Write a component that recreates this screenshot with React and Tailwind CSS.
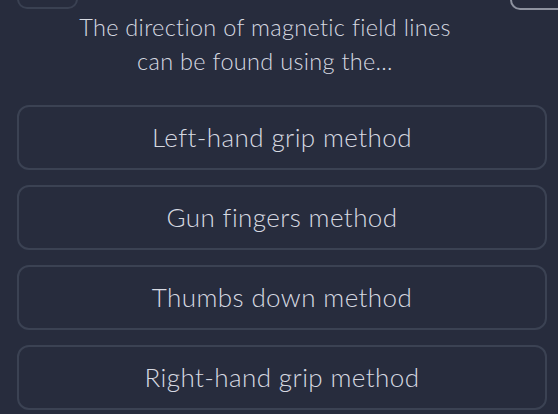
import React from 'react';

const options = [
  'Left-hand grip method',
  'Gun fingers method',
  'Thumbs down method',
  'Right-hand grip method'
];

const App = () => {
  return (
    <div
      className="w-[558px] h-[414px] overflow-hidden bg-[#272c3d] text-[#d6d9e1] flex flex-col"
      style={{ fontFamily: 'Lato, "Noto Sans", sans-serif' }}>
      <div className="flex justify-between h-[10px]">
        <div className="ml-[17px] w-[61px] h-[10px] -mt-[1px] rounded-b-[10px] border-2 border-t-0 border-[#3a4152]" />
        <div className="w-[48px] h-[10px] rounded-bl-[20px] border-2 border-t-0 border-r-0 border-[#8e93a0]" />
      </div>
      <div className="pr-[28px] text-center text-[23.5px] leading-[34px] font-light tracking-[0.3px]">
        <p>The direction of magnetic field lines</p>
        <p>can be found using the...</p>
      </div>
      <div className="mt-[27px] flex flex-col gap-[15px] pl-[17px] pr-[11px]">
        {options.map((item, index) => (
          <div
            key={index}
            className="h-[65px] flex items-center justify-center rounded-[12px] border-2 border-[#3b4253] text-[26px] font-light tracking-[0.4px]">
            {item}
          </div>
        ))}
      </div>
    </div>
  );
};

export default App;
